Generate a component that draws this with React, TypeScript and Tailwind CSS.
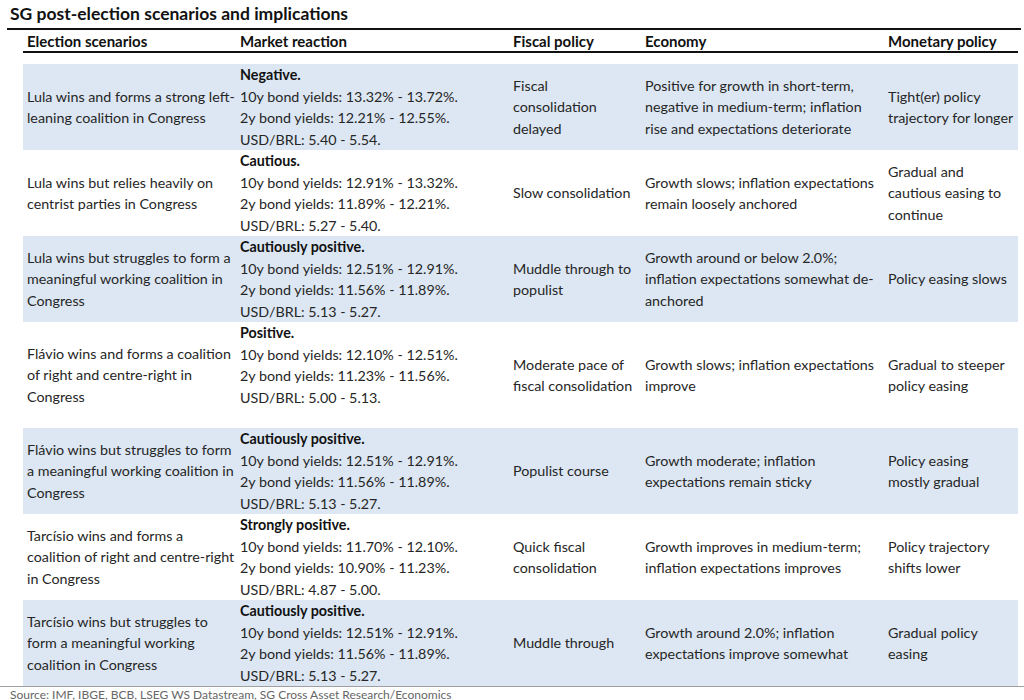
type Row = {
  scenario: string[];
  tone: string;
  market: string[];
  fiscal: string[];
  economy: string[];
  monetary: string[];
  shaded: boolean;
  height: string;
};

const rows: Row[] = [
  {
    scenario: ['Lula wins and forms a strong left-', 'leaning coalition in Congress'],
    tone: 'Negative.',
    market: ['10y bond yields: 13.32% - 13.72%.', '2y bond yields: 12.21% - 12.55%.', 'USD/BRL: 5.40 - 5.54.'],
    fiscal: ['Fiscal', 'consolidation', 'delayed'],
    economy: ['Positive for growth in short-term,', 'negative in medium-term; inflation', 'rise and expectations deteriorate'],
    monetary: ['Tight(er) policy', 'trajectory for longer'],
    shaded: true,
    height: 'h-[86px]',
  },
  {
    scenario: ['Lula wins but relies heavily on', 'centrist parties in Congress'],
    tone: 'Cautious.',
    market: ['10y bond yields: 12.91% - 13.32%.', '2y bond yields: 11.89% - 12.21%.', 'USD/BRL: 5.27 - 5.40.'],
    fiscal: ['Slow consolidation'],
    economy: ['Growth slows; inflation expectations', 'remain loosely anchored'],
    monetary: ['Gradual and', 'cautious easing to', 'continue'],
    shaded: false,
    height: 'h-[86px]',
  },
  {
    scenario: ['Lula wins but struggles to form a', 'meaningful working coalition in', 'Congress'],
    tone: 'Cautiously positive.',
    market: ['10y bond yields: 12.51% - 12.91%.', '2y bond yields: 11.56% - 11.89%.', 'USD/BRL: 5.13 - 5.27.'],
    fiscal: ['Muddle through to', 'populist'],
    economy: ['Growth around or below 2.0%;', 'inflation expectations somewhat de-', 'anchored'],
    monetary: ['Policy easing slows'],
    shaded: true,
    height: 'h-[86px]',
  },
  {
    scenario: ['Flávio wins and forms a coalition', 'of right and centre-right in', 'Congress'],
    tone: 'Positive.',
    market: ['10y bond yields: 12.10% - 12.51%.', '2y bond yields: 11.23% - 11.56%.', 'USD/BRL: 5.00 - 5.13.'],
    fiscal: ['Moderate pace of', 'fiscal consolidation'],
    economy: ['Growth slows; inflation expectations', 'improve'],
    monetary: ['Gradual to steeper', 'policy easing'],
    shaded: false,
    height: 'h-[106px]',
  },
  {
    scenario: ['Flávio wins but struggles to form', 'a meaningful working coalition in', 'Congress'],
    tone: 'Cautiously positive.',
    market: ['10y bond yields: 12.51% - 12.91%.', '2y bond yields: 11.56% - 11.89%.', 'USD/BRL: 5.13 - 5.27.'],
    fiscal: ['Populist course'],
    economy: ['Growth moderate; inflation', 'expectations remain sticky'],
    monetary: ['Policy easing', 'mostly gradual'],
    shaded: true,
    height: 'h-[86px]',
  },
  {
    scenario: ['Tarcísio wins and forms a', 'coalition of right and centre-right', 'in Congress'],
    tone: 'Strongly positive.',
    market: ['10y bond yields: 11.70% - 12.10%.', '2y bond yields: 10.90% - 11.23%.', 'USD/BRL: 4.87 - 5.00.'],
    fiscal: ['Quick fiscal', 'consolidation'],
    economy: ['Growth improves in medium-term;', 'inflation expectations improves'],
    monetary: ['Policy trajectory', 'shifts lower'],
    shaded: false,
    height: 'h-[86px]',
  },
  {
    scenario: ['Tarcísio wins but struggles to', 'form a meaningful working', 'coalition in Congress'],
    tone: 'Cautiously positive.',
    market: ['10y bond yields: 12.51% - 12.91%.', '2y bond yields: 11.56% - 11.89%.', 'USD/BRL: 5.13 - 5.27.'],
    fiscal: ['Muddle through'],
    economy: ['Growth around 2.0%; inflation', 'expectations improve somewhat'],
    monetary: ['Gradual policy', 'easing'],
    shaded: true,
    height: 'h-[86px]',
  },
];

const Lines = ({ lines }: { lines: string[] }) => (
  <div className="flex flex-col justify-center">
    {lines.map((l) => (
      <span key={l} className="whitespace-nowrap">
        {l}
      </span>
    ))}
  </div>
);

const cols = 'grid grid-cols-[213px_273px_132px_243px_134px]';

export default function App() {
  return (
    <div className="w-[1024px] h-[700px] overflow-hidden bg-white text-[#262626] font-['Lato','Liberation_Sans',sans-serif]">
      <div className="h-[28px] pl-[10px] pt-[4px] text-[17.5px] leading-[20px] font-bold text-[#111]">
        SG post-election scenarios and implications
      </div>
      <div className="ml-[7px] mr-[3px] h-[2px] bg-[#111]" />
      <div className={`${cols} ml-[23px] w-[995px] h-[21px] items-center text-[15px] font-bold text-[#111]`}>
        <div className="pl-[4px]">Election scenarios</div>
        <div className="pl-[4px]">Market reaction</div>
        <div className="pl-[4px]">Fiscal policy</div>
        <div className="pl-[4px]">Economy</div>
        <div className="pl-[4px]">Monetary policy</div>
      </div>
      <div className="ml-[23px] w-[995px] h-[2px] bg-[#111]" />
      <div className="h-[11px]" />
      <div className="ml-[23px] w-[995px] text-[14.3px] leading-[21.5px]">
        {rows.map((r, i) => (
          <div key={i} className={`${cols} ${r.height} ${r.shaded ? 'bg-[#dce7f3]' : 'bg-white'}`}>
            <div className="pl-[4px] flex items-center">
              <Lines lines={r.scenario} />
            </div>
            <div className="pl-[4px] flex flex-col">
              <span className="font-bold text-[#111] whitespace-nowrap">{r.tone}</span>
              {r.market.map((m) => (
                <span key={m} className="whitespace-nowrap">
                  {m}
                </span>
              ))}
            </div>
            <div className="pl-[4px] flex items-center">
              <Lines lines={r.fiscal} />
            </div>
            <div className="pl-[4px] flex items-center">
              <Lines lines={r.economy} />
            </div>
            <div className="pl-[4px] flex items-center">
              <Lines lines={r.monetary} />
            </div>
          </div>
        ))}
      </div>
      <div className="h-[1px] bg-[#a0a0a0]" />
      <div className="pl-[10px] pt-[1px] text-[12px] leading-[14px] text-[#666] whitespace-nowrap">
        Source: IMF, IBGE, BCB, LSEG WS Datastream, SG Cross Asset Research/Economics
      </div>
    </div>
  );
}
